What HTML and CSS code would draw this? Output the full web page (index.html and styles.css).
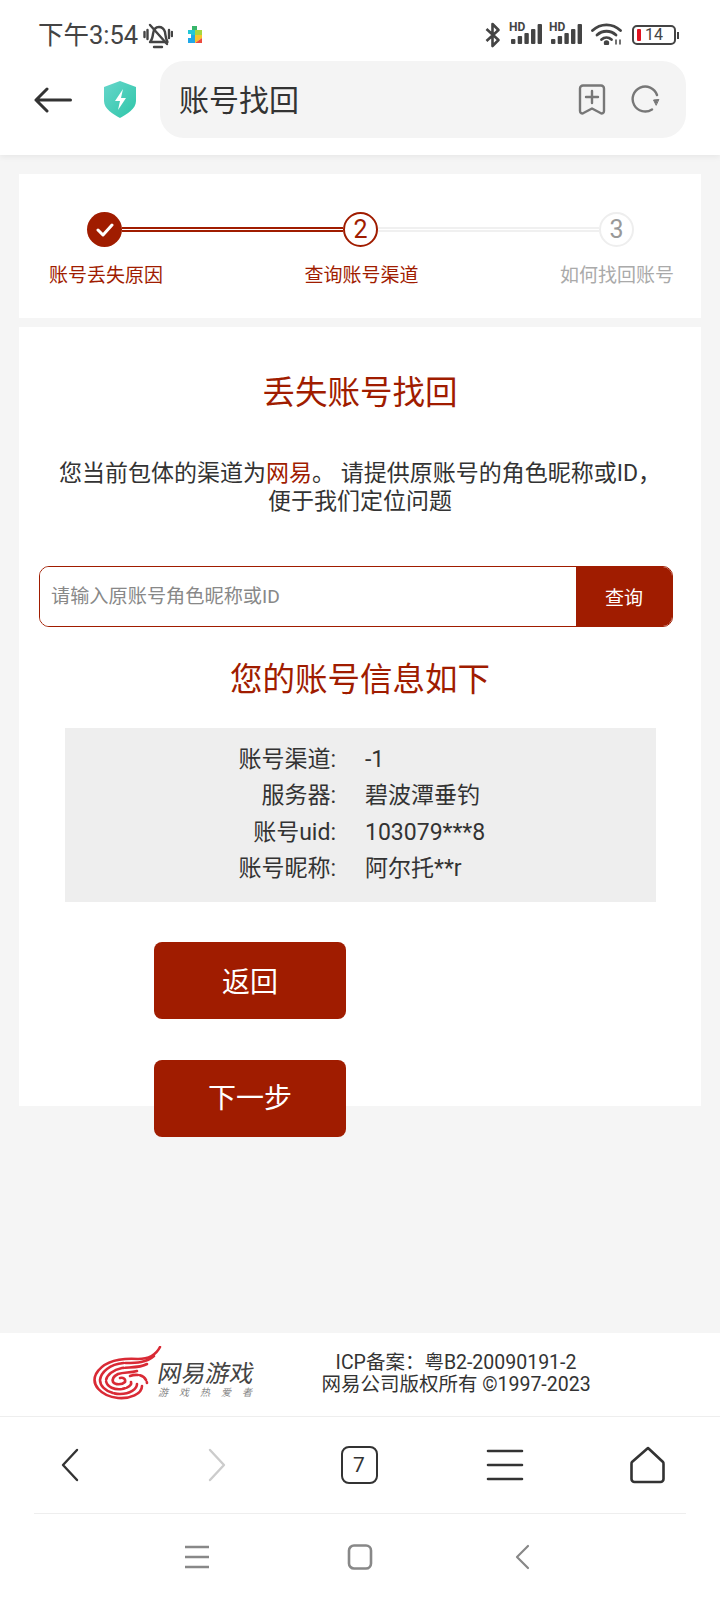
FILE: index.html
```html
<!DOCTYPE html>
<html lang="zh-CN">
<head>
    <meta charset="UTF-8">
    <meta name="viewport" content="width=device-width, initial-scale=1.0">
    <title>账号找回</title>
    <link rel="stylesheet" href="styles.css">
</head>
<body>
    <header class="browser-head">
        <div class="status-bar">
            <div class="status-left">
                <span class="status-time">下午3:54</span>
                <svg class="icon-bell" viewBox="0 0 30 27" fill="none" stroke="#444" stroke-width="2.4" stroke-linecap="round" stroke-linejoin="round">
                    <path d="M7 20c2-2 2.500-4 3-8 .5-4 2.500-7 6-7 3 0 5 2 6 5 .5 3 .5 7 2.500 10z"/>
                    <path d="M11 25h8"/>
                    <path d="M7 3l17 19"/>
                    <path d="M1.500 10v5M4.500 8v9M26 8v8M29 10v4"/>
                </svg>
                <svg class="icon-play" viewBox="0 0 16 18">
                    <path d="M5 0h5v4H5z" fill="#37b56a"/>
                    <path d="M1 4h7v5H1z" fill="#22c7d6"/>
                    <path d="M8 4h7l0 5H8z" fill="#a5d63f"/>
                    <path d="M1 9h7v8H1z" fill="#1fa8e8"/>
                    <path d="M8 9h7v3l-7 5z" fill="#f7c42c"/>
                    <path d="M8 17l7-5v5z" fill="#ec4a3f"/>
                    <path d="M0 8h4v4H0z" fill="#fff"/>
                </svg>
            </div>
            <div class="status-right">
                <svg class="icon-bt" viewBox="0 0 16 26" fill="none" stroke="#444" stroke-width="2.6" stroke-linejoin="round">
                    <path d="M1.500 7l12 11-6 6V2l6 6-12 11"/>
                </svg>
                <svg class="icon-signal" viewBox="0 -4 36 26">
                    <text x="0" y="8" class="signal-hd">HD</text>
                    <rect x="2" y="16" width="4.400" height="5" rx="1"/>
                    <rect x="8.700" y="13" width="4.400" height="8" rx="1"/>
                    <rect x="15.400" y="10" width="4.400" height="11" rx="1"/>
                    <rect x="22" y="6" width="4.400" height="15" rx="1"/>
                    <rect x="28.600" y="1" width="4.400" height="20" rx="1"/>
                </svg>
                <svg class="icon-signal" viewBox="0 -4 36 26">
                    <text x="0" y="8" class="signal-hd">HD</text>
                    <rect x="2" y="16" width="4.400" height="5" rx="1"/>
                    <rect x="8.700" y="13" width="4.400" height="8" rx="1"/>
                    <rect x="15.400" y="10" width="4.400" height="11" rx="1"/>
                    <rect x="22" y="6" width="4.400" height="15" rx="1"/>
                    <rect x="28.600" y="1" width="4.400" height="20" rx="1"/>
                </svg>
                <svg class="icon-wifi" viewBox="0 0 31 22" fill="none" stroke="#444" stroke-width="2.8" stroke-linecap="round">
                    <path d="M1.500 7.500c8-7.500 20-7.500 28 0"/>
                    <path d="M6 12c5.500-5 13.500-5 19 0"/>
                    <path d="M10.500 16.500c3-2.500 7-2.500 10 0"/>
                    <circle cx="15.500" cy="20" r="1.300" fill="#444"/>
                    <path d="M25 17v4M29 17v4" stroke-width="1.500"/>
                </svg>
                <div class="battery">
                    <span class="battery-level"></span>
                    <span class="battery-num">14</span>
                </div>
                <span class="battery-nub"></span>
            </div>
        </div>
        <div class="toolbar">
            <svg class="icon-back" viewBox="0 0 38 26" fill="none" stroke="#333" stroke-width="3" stroke-linecap="round" stroke-linejoin="round">
                <path d="M36.500 13H2M13 2L2 13l11 11"/>
            </svg>
            <svg class="icon-shield" viewBox="0 0 34 37">
                <defs>
                    <linearGradient id="shieldFill" x1="0" y1="0" x2="1" y2="1">
                        <stop offset="0" stop-color="#66d6cb"/>
                        <stop offset="1" stop-color="#2fc6a8"/>
                    </linearGradient>
                </defs>
                <path d="M17 0l16 6v14c0 8-9 13-16 17C10 33 1 28 1 20V6z" fill="url(#shieldFill)"/>
                <path d="M20 8l-8 12h5l-2 9 8-12h-5z" fill="#fff"/>
            </svg>
            <div class="address-bar">
                <span class="address-text">账号找回</span>
                <svg class="icon-bookmark" viewBox="0 0 28 31" fill="none" stroke="#777" stroke-width="2.4" stroke-linejoin="round" stroke-linecap="round">
                    <path d="M5 1.500h18a3 3 0 0 1 3 3V27c0 2-2 3-3.500 2L14 24.500 5.500 29C4 30 2 29 2 27V4.500a3 3 0 0 1 3-3z"/>
                    <path d="M8 13h12M14 7v12"/>
                </svg>
                <svg class="icon-refresh" viewBox="0 0 29 29" fill="none" stroke="#777" stroke-width="2.4" stroke-linecap="round">
                    <path d="M21 24.500A12.500 12.500 0 1 1 26 10"/>
                    <path d="M27.500 14.500l-5 .5 2.500 5z" fill="#777" stroke-width="1"/>
                </svg>
            </div>
        </div>
    </header>

    <main class="page">
        <section class="steps-card">
            <div class="steps-track">
                <span class="step-dot step-done">
                    <svg viewBox="0 0 18 14" fill="none" stroke="#fff" stroke-width="3" stroke-linecap="round" stroke-linejoin="round" class="icon-check">
                        <path d="M2 7l5 5 9-10"/>
                    </svg>
                </span>
                <span class="step-line step-line-on"></span>
                <span class="step-dot step-current">2</span>
                <span class="step-line"></span>
                <span class="step-dot step-todo">3</span>
            </div>
            <div class="steps-labels">
                <span class="step-label">账号丢失原因</span>
                <span class="step-label">查询账号渠道</span>
                <span class="step-label step-label-todo">如何找回账号</span>
            </div>
        </section>

        <section class="main-card">
            <h1 class="card-title">丢失账号找回</h1>
            <p class="card-intro">您当前包体的渠道为<span class="accent">网易</span>。 请提供原账号的角色昵称或ID，<br>便于我们定位问题</p>

            <form class="search-box">
                <input class="search-input" type="text" placeholder="请输入原账号角色昵称或ID">
                <button class="search-btn" type="button">查询</button>
            </form>

            <h2 class="info-title">您的账号信息如下</h2>
            <dl class="info-box">
                <dt>账号渠道:</dt><dd>-1</dd>
                <dt>服务器:</dt><dd>碧波潭垂钓</dd>
                <dt>账号uid:</dt><dd>103079***8</dd>
                <dt>账号昵称:</dt><dd>阿尔托**r</dd>
            </dl>

            <button class="action-btn" type="button">返回</button>
            <button class="action-btn action-next" type="button">下一步</button>
        </section>
    </main>

    <footer class="site-footer">
        <div class="logo">
            <svg class="logo-mark" viewBox="0 0 70 55" fill="none" stroke="#d92a35" stroke-width="2.6" stroke-linecap="round">
                <path d="M68 1C64 9 56 13 46 13 30 12 12 14 4 28-1 38 8 50 26 52 38 53 50 48 50 40"/>
                <path d="M62 10C54 17 44 17 32 17 18 18 9 26 8 34 8 42 18 48 28 48 38 48 45 43 45 38" stroke-dasharray="30 2 50 2"/>
                <path d="M55 18C48 22 38 21 30 22 20 24 14 30 14 35 15 41 22 44 30 43 36 42 40 39 39 36" stroke-dasharray="22 2"/>
                <path d="M45 25C38 27 32 26 26 28 22 30 20 33 21 36 23 39 30 39 33 36 34 33 31 31 28 32"/>
                <path d="M38 30C46 27 54 30 55 37" stroke-dasharray="8 2"/>
            </svg>
            <div class="logo-words">
                <span class="logo-name">网易游戏</span>
                <span class="logo-slogan">游戏热爱者</span>
            </div>
        </div>
        <div class="copyright">
            <div>ICP备案：粤B2-20090191-2</div>
            <div>网易公司版权所有 ©1997-2023</div>
        </div>
    </footer>

    <nav class="browser-nav">
        <svg class="nav-icon" viewBox="0 0 40 40" fill="none" stroke="#333" stroke-width="2.4" stroke-linecap="round" stroke-linejoin="round">
            <path d="M27 5L13 20l14 15"/>
        </svg>
        <svg class="nav-icon" viewBox="0 0 40 40" fill="none" stroke="#ccc" stroke-width="2.4" stroke-linecap="round" stroke-linejoin="round">
            <path d="M15 5l14 15-14 15"/>
        </svg>
        <div class="tab-count">7</div>
        <svg class="nav-icon" viewBox="0 0 40 40" fill="none" stroke="#333" stroke-width="2.6" stroke-linecap="round">
            <path d="M3 6h34M3 20h34M3 34h34"/>
        </svg>
        <svg class="nav-icon" viewBox="2 0 40 40" fill="none" stroke="#333" stroke-width="2.6" stroke-linejoin="round">
            <path d="M20 3L35 17a3 3 0 0 1 .5 2v15a3 3 0 0 1-3 3H6.500a3 3 0 0 1-3-3V19a3 3 0 0 1 .5-2z"/>
        </svg>
    </nav>

    <div class="system-nav">
        <svg class="sys-icon" viewBox="0 0 26 26" fill="none" stroke="#888" stroke-width="2.6">
            <path d="M1 3h24M1 13h24M1 23h24"/>
        </svg>
        <svg class="sys-icon" viewBox="0 0 26 26" fill="none" stroke="#888" stroke-width="2.6">
            <rect x="2" y="1.500" width="22" height="23" rx="5"/>
        </svg>
        <svg class="sys-icon" viewBox="0 0 26 26" fill="none" stroke="#888" stroke-width="2.2" stroke-linecap="round" stroke-linejoin="round">
            <path d="M18 2L7 13l11 11"/>
        </svg>
    </div>
</body>
</html>
```

FILE: styles.css
```css
* {
    box-sizing: border-box;
}
body {
    margin: 0;
    display: flex;
    flex-direction: column;
    height: 1600px;
    overflow: hidden;
    background-color: #f5f5f5;
    color: #333;
    font-family: Roboto, "Noto Sans CJK SC", sans-serif;
}

/* browser chrome */
.browser-head {
    background-color: #fff;
    height: 155px;
    flex: none;
    box-shadow: 0 2px 6px rgba(0, 0, 0, 0.06);
}
.status-bar {
    height: 61px;
    display: flex;
    justify-content: space-between;
    padding: 20px 41px 0 38px;
}
.status-left, .status-right {
    display: flex;
    align-items: flex-start;
}
.status-time {
    font-size: 25.5px;
    line-height: 30px;
    color: #444;
}
.icon-bell {
    width: 30px;
    height: 27px;
    margin: 2px 0 0 5px;
}
.icon-play {
    width: 16px;
    height: 18px;
    margin: 6px 0 0 14px;
}
.icon-bt {
    width: 16px;
    height: 26px;
    margin: 2px 8px 0 0;
}
.icon-signal {
    width: 36px;
    height: 26px;
    margin: -1px 4px 0 0;
    fill: #444;
}
.signal-hd {
    font-size: 12px;
    font-weight: 700;
    font-family: Roboto, sans-serif;
}
.icon-wifi {
    width: 31px;
    height: 22px;
    margin: 3px 10px 0 2px;
}
.battery {
    width: 44px;
    height: 20px;
    margin-top: 5px;
    border: 2px solid #444;
    border-radius: 5px;
    display: flex;
    align-items: center;
    padding-left: 3px;
}
.battery-level {
    width: 4px;
    height: 12px;
    background-color: #e0121f;
    border-radius: 1px;
}
.battery-num {
    font-size: 16px;
    line-height: 16px;
    color: #444;
    margin-left: 4px;
}
.battery-nub {
    width: 2px;
    height: 7px;
    margin: 12px 0 0 1px;
    background-color: #444;
}
.toolbar {
    display: flex;
    align-items: center;
    height: 77px;
    padding-left: 34px;
}
.icon-back {
    width: 38px;
    height: 26px;
}
.icon-shield {
    width: 34px;
    height: 37px;
    margin-left: 31px;
}
.address-bar {
    width: 526px;
    height: 77px;
    margin-left: 23px;
    padding: 0 26px 0 19px;
    display: flex;
    align-items: center;
    background-color: #f4f4f4;
    border-radius: 24px;
}
.address-text {
    flex: 1;
    padding-bottom: 3px;
    font-size: 30px;
    color: #333;
}
.icon-bookmark {
    width: 28px;
    height: 31px;
}
.icon-refresh {
    width: 29px;
    height: 29px;
    margin-left: 25px;
}

/* page content */
.page {
    flex: 1;
    padding: 19px 19px 0;
}
.steps-card {
    height: 144px;
    background-color: #fff;
    padding-top: 38px;
}
.steps-track {
    display: flex;
    align-items: center;
    padding: 0 67px 0 68px;
}
.step-dot {
    width: 35px;
    height: 35px;
    flex: none;
    border-radius: 50%;
    display: flex;
    align-items: center;
    justify-content: center;
    font-size: 25px;
}
.step-done {
    background-color: #a01c00;
}
.icon-check {
    width: 18px;
    height: 14px;
}
.step-current {
    border: 2px solid #a01c00;
    color: #a01c00;
}
.step-todo {
    border: 2px solid #eee;
    color: #999;
}
.step-line {
    flex: 1;
    height: 5px;
    border-top: 2px solid #f0f0f0;
    border-bottom: 2px solid #f0f0f0;
}
.step-line-on {
    border-color: #a01c00;
}
.steps-labels {
    display: flex;
    justify-content: space-between;
    padding: 0 27px 0 30px;
    margin-top: 16px;
}
.step-label {
    font-size: 19px;
    line-height: 26px;
    color: #a01c00;
}
.step-label-todo {
    color: #aaa;
}

.main-card {
    height: 779px;
    margin-top: 9px;
    padding-top: 46px;
    background-color: #fff;
}
.card-title, .info-title {
    margin: 0;
    font-size: 32.5px;
    font-weight: 400;
    line-height: 40px;
    text-align: center;
    color: #a01c00;
}
.card-intro {
    margin: 47px 0 0;
    font-size: 23px;
    line-height: 28px;
    text-align: center;
    color: #333;
}
.accent {
    color: #a01c00;
}
.search-box {
    display: flex;
    height: 61px;
    margin: 50px 28px 0 20px;
    border: 1.5px solid #a01c00;
    border-radius: 10px;
    overflow: hidden;
}
.search-input {
    flex: 1;
    min-width: 0;
    padding: 0 0 0 11px;
    border: none;
    outline: none;
    font-family: inherit;
    font-size: 19.2px;
}
.search-input::placeholder {
    color: #888;
}
.search-btn {
    width: 96px;
    border: none;
    background-color: #a01c00;
    color: #fff;
    font-family: inherit;
    font-size: 19px;
}
.info-title {
    margin-top: 33px;
}
.info-box {
    display: grid;
    grid-template-columns: 271px 1fr;
    grid-auto-rows: 36.4px;
    column-gap: 29px;
    height: 174px;
    margin: 28px 45px 0 46px;
    padding-top: 14px;
    background-color: #eee;
    font-size: 23px;
    line-height: 36px;
    color: #333;
}
.info-box dt {
    text-align: right;
}
.info-box dd {
    margin: 0;
}
.action-btn {
    display: block;
    width: 192px;
    height: 77px;
    margin: 40px 0 0 135px;
    padding-bottom: 3px;
    border: none;
    border-radius: 8px;
    background-color: #a01c00;
    color: #fff;
    font-family: inherit;
    font-size: 28px;
}
.action-next {
    margin-top: 41px;
    padding-bottom: 6px;
}

/* footer */
.site-footer {
    height: 84px;
    flex: none;
    display: flex;
    align-items: flex-start;
    background-color: #fff;
    border-bottom: 1px solid #eee;
}
.logo {
    display: flex;
    margin: 13px 0 0 92px;
    width: 225px;
}
.logo-mark {
    width: 70px;
    height: 55px;
    flex: none;
}
.logo-words {
    display: flex;
    flex-direction: column;
    margin: 15px 0 0 -4px;
}
.logo-name {
    font-size: 24px;
    line-height: 26px;
    color: #444;
    transform: skewX(-10deg);
}
.logo-slogan {
    font-size: 10px;
    line-height: 12px;
    color: #888;
    letter-spacing: 11px;
    font-style: italic;
}
.copyright {
    width: 278px;
    margin-top: 19px;
    font-size: 19.5px;
    line-height: 22px;
    text-align: center;
    color: #333;
    white-space: nowrap;
}

.browser-nav {
    height: 96px;
    flex: none;
    padding: 0 50px;
    display: flex;
    align-items: center;
    justify-content: space-between;
    background-color: #fff;
}
.nav-icon {
    width: 40px;
    height: 40px;
}
.tab-count {
    width: 37px;
    height: 38px;
    margin-right: 2px;
    border: 2.5px solid #333;
    border-radius: 8px;
    display: flex;
    align-items: center;
    justify-content: center;
    font-size: 21px;
    color: #333;
}
.system-nav {
    height: 87px;
    flex: none;
    background-color: #fff;
    display: flex;
    justify-content: center;
    align-items: center;
    gap: 137px;
    position: relative;
}
.system-nav::before {
    content: "";
    position: absolute;
    top: 0;
    left: 34px;
    right: 34px;
    border-top: 1px solid #eee;
}
.sys-icon {
    width: 26px;
    height: 26px;
}
```
